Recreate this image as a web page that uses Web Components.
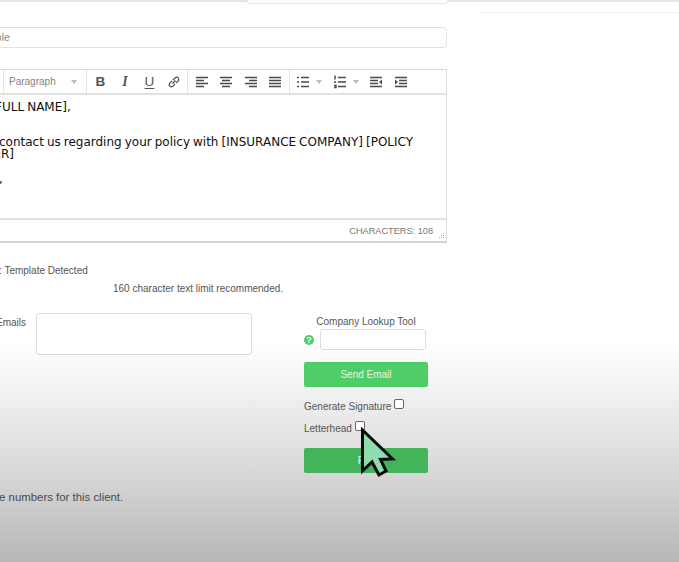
<!DOCTYPE html>
<html>
<head>
<meta charset="utf-8">
<style>
  html, body { margin: 0; padding: 0; overflow: hidden; }
  body { font-family: "Liberation Sans", Arial, sans-serif; }
</style>
</head>
<body>
<client-page>
  <top-rules slot="top"></top-rules>
  <subject-field value="Example"></subject-field>
  <rich-editor chars="108">
    <p>Hello [FULL NAME],</p>
    <p style="margin-top:23px">Please contact us regarding your policy with [INSURANCE COMPANY] [POLICY NUMBER]</p>
    <p style="margin-top:13px">Cheers,</p>
  </rich-editor>
  <send-panel></send-panel>
  <p-note>We have no phone numbers for this client.</p-note>
</client-page>
<script>
class ClientPage extends HTMLElement {
  constructor() {
    super();
    this.attachShadow({ mode: 'open' });
    this.shadowRoot.innerHTML = `<style>
:host { display: block; width: 679px; height: 562px; overflow: hidden; position: relative;
  background: linear-gradient(to bottom, #fff 0, #fff 340px, #f5f5f5 380px, #dcdcdc 460px, #b7b7b7 562px); }
.col { margin-left: -153px; width: 600px; }
.cursor { position: absolute; left: 358px; top: 426px; }
</style>
<slot name="top"></slot>
<div class="col"><slot></slot></div>
<svg class="cursor" width="40" height="54" viewBox="0 0 40 54">
  <path d="M4.500 4 L4.500 45 L14 36 L21 49 L28 45 L22.500 33.500 L34.500 33 Z" fill="#8fdcb0" stroke="#0b0b0b" stroke-width="3" stroke-linejoin="miter"/>
</svg>`;
  }
}
class TopRules extends HTMLElement {
  constructor() {
    super();
    this.attachShadow({ mode: 'open' });
    this.shadowRoot.innerHTML = `<style>
:host { display: flex; height: 14px; position: relative; }
.left { width: 247px; height: 2px; background: #e4e4e4; }
.box { width: 199px; height: 3px; border: 1px solid #e6e6e6; border-top: 0; border-radius: 0 0 3px 3px; }
.right { flex: 1; height: 14px; display: flex; flex-direction: column; }
.right i { display: block; height: 2px; background: #e4e4e4; }
.right b { display: block; height: 1px; margin: 10px 0 0 32px; background: #eeeeee; }
</style><div class="left"></div><div class="box"></div><div class="right"><i></i><b></b></div>`;
  }
}
class SubjectField extends HTMLElement {
  constructor() {
    super();
    this.attachShadow({ mode: 'open' });
    this.shadowRoot.innerHTML = `<style>
:host { display: block; margin-top: 13px; }
.f { height: 19px; border: 1px solid #e2e2e2; border-radius: 4px; background: #fff; padding-left: 121px;
  font-size: 10.5px; line-height: 19px; color: #8c8c8c; }
</style><div class="f"></div>`;
    this.shadowRoot.querySelector('.f').textContent = this.getAttribute('value');
  }
}
const icon = (d, tri = '', sw = 1.5) => `<svg width="14" height="14" viewBox="0 0 14 14"><path d="${d}" fill="none" stroke="#4a4a4a" stroke-width="${sw}"/>${tri ? `<path d="${tri}" fill="#4a4a4a"/>` : ''}</svg>`;
class RichEditor extends HTMLElement {
  constructor() {
    super();
    this.attachShadow({ mode: 'open' });
    const align = (rows) => rows.map(([x1, x2], i) => `M${x1} ${2.500 + i * 3}H${x2}`).join('');
    this.shadowRoot.innerHTML = `<style>
:host { display: block; margin-top: 21px; }
.wrap { border: 1px solid #dcdcdc; border-bottom: 2px solid #d4d4d4; height: 171px; display: flex; flex-direction: column; background: #fff; }
.bar { height: 23px; flex: none; border-bottom: 2px solid #e2e2e2; display: flex; align-items: stretch; padding-left: 155px; }
.group { display: flex; align-items: center; border-left: 1px solid #e4e4e4; }
.fmt { width: 83px; font-size: 10px; color: #858585; padding-left: 5px; box-sizing: border-box; display: flex; justify-content: space-between; align-items: center; padding-right: 9px; }
.caret { width: 0; height: 0; border: 3.500px solid transparent; border-top: 4px solid #bbb; border-bottom: 0; }
.btn { width: 24.600px; display: flex; justify-content: center; align-items: center; }
.txt { font: bold 13.500px "Liberation Sans", sans-serif; color: #555; }
.drop { display: flex; align-items: center; gap: 6px; width: 36.500px; justify-content: center; }
.body { flex: 1; padding: 6px 24px 0 109px; font: 12px/12px "DejaVu Sans", Verdana, sans-serif; word-spacing: -0.800px; color: #111; }
::slotted(p) { margin: 0; }
.foot { flex: none; height: 21px; border-top: 2px solid #e2e2e2; display: flex; align-items: center; justify-content: flex-end;
  padding-right: 13px; font-size: 9.200px; color: #777; position: relative; }
.grip { position: absolute; right: 1px; bottom: 1px; }
</style>
<div class="wrap">
  <div class="bar">
    <div class="group fmt"><span>Paragraph</span><span class="caret"></span></div>
    <div class="group" style="padding:0 1px">
      <span class="btn"><span class="txt">B</span></span>
      <span class="btn"><span class="txt" style="font:italic bold 14px 'Liberation Serif',serif">I</span></span>
      <span class="btn"><span class="txt" style="text-decoration:underline;text-underline-offset:2px;font-weight:400">U</span></span>
      <span class="btn">${icon('M5.500 8.500 L8.500 5.500 M5 6 L2.800 8.200 a2.100 2.100 0 0 0 3 3 L8 9 M6 5 L8.200 2.800 a2.100 2.100 0 0 1 3 3 L9 8', '', 1.2)}</span>
    </div>
    <div class="group" style="padding:0 1px">
      <span class="btn">${icon(align([[1,13],[1,9],[1,13],[1,9]]))}</span>
      <span class="btn">${icon(align([[1,13],[3,11],[1,13],[3,11]]))}</span>
      <span class="btn">${icon(align([[1,13],[5,13],[1,13],[5,13]]))}</span>
      <span class="btn">${icon(align([[1,13],[1,13],[1,13],[1,13]]))}</span>
    </div>
    <div class="group" style="padding-left:1px">
      <span class="drop">${icon('M5 2.500H13M5 7H13M5 11.500H13M1 2.500H3M1 7H3M1 11.500H3')}<span class="caret"></span></span>
      <span class="drop">${icon('M5 2.500H13M5 7H13M5 11.500H13M2 0.500V4.500M1 7H3M1 10.500H3V12.500H1')}<span class="caret"></span></span>
      <span class="btn">${icon('M1 2.500H13M1 11.500H13M1 5.500H9M1 8.500H9', 'M13 4.500V9.500L10 7Z')}</span>
      <span class="btn">${icon('M1 2.500H13M1 11.500H13M5 5.500H13M5 8.500H13', 'M1 4.500V9.500L4 7Z')}</span>
    </div>
  </div>
  <div class="body"><slot></slot></div>
  <div class="foot">CHARACTERS: ${this.getAttribute('chars')}
    <svg class="grip" width="9" height="9" viewBox="0 0 9 9"><path d="M7 2h1v1H7zM5 4h1v1H5zM7 4h1v1H7zM3 6h1v1H3zM5 6h1v1H5zM7 6h1v1H7z" fill="#aaa"/></svg>
  </div>
</div>`;
  }
}
class SendPanel extends HTMLElement {
  constructor() {
    super();
    this.attachShadow({ mode: 'open' });
    this.shadowRoot.innerHTML = `<style>
:host { display: block; font-size: 10px; color: #555; }
.detected { margin: 22px 0 0 0; padding-left: 117px; line-height: 12px; }
.limit { margin: 6px 0 0 0; padding-left: 266px; line-height: 12px; }
.row { display: flex; margin-top: 18px; }
.label { flex: none; padding: 4px 0 0 149px; box-sizing: border-box; width: 189px; line-height: 12px; }
.area { width: 214px; height: 40px; flex: none; border: 1px solid #dcdcdc; border-radius: 3px; background: #fff; }
.side { margin-left: 52px; width: 124px; flex: none; margin-top: 2px; }
.lookup { text-align: center; line-height: 12px; padding-top: 1px; }
.q { display: flex; align-items: center; gap: 6px; margin-top: 1px; }
.q b { width: 10px; height: 10px; border-radius: 50%; background: #4fce6a; color: #fff; font-size: 9px; line-height: 10px; text-align: center; flex: none; }
.q span { width: 104px; height: 19px; border: 1px solid #dcdcdc; border-radius: 3px; background: #fff; display: block; }
.go { height: 25px; border-radius: 2px; background: #4fcd69; font-size: 10px; line-height: 25px; text-align: center; color: #e3f7e8; margin-top: 12px; }
.chk { display: flex; align-items: flex-start; gap: 3px; line-height: 12px; }
.chk i { width: 8px; height: 8px; border: 1px solid #666; border-radius: 2px; background: #fff; display: block; margin-top: -2px; }
.dark { background: #43b45a; margin-top: 13px; }
</style>
<p class="detected">Generic: Template Detected</p>
<p class="limit">160 character text limit recommended.</p>
<div class="row">
  <div class="label">Emails</div>
  <div class="area"></div>
  <div class="side">
    <div class="lookup">Company Lookup Tool</div>
    <div class="q"><b>?</b><span></span></div>
    <div class="go">Send Email</div>
    <div class="chk" style="margin-top:14px"><span>Generate Signature</span><i></i></div>
    <div class="chk" style="margin-top:10px"><span>Letterhead</span><i></i></div>
    <div class="go dark">Fax</div>
  </div>
</div>`;
  }
}
class PNote extends HTMLElement {
  constructor() {
    super();
    this.attachShadow({ mode: 'open' });
    this.shadowRoot.innerHTML = `<style>
:host { display: block; margin-top: 17px; padding-left: 63px; font-size: 11.400px; line-height: 14px; color: #4a4a4a; }
</style><slot></slot>`;
  }
}
customElements.define('client-page', ClientPage);
customElements.define('top-rules', TopRules);
customElements.define('subject-field', SubjectField);
customElements.define('rich-editor', RichEditor);
customElements.define('send-panel', SendPanel);
customElements.define('p-note', PNote);
</script>
</body>
</html>
